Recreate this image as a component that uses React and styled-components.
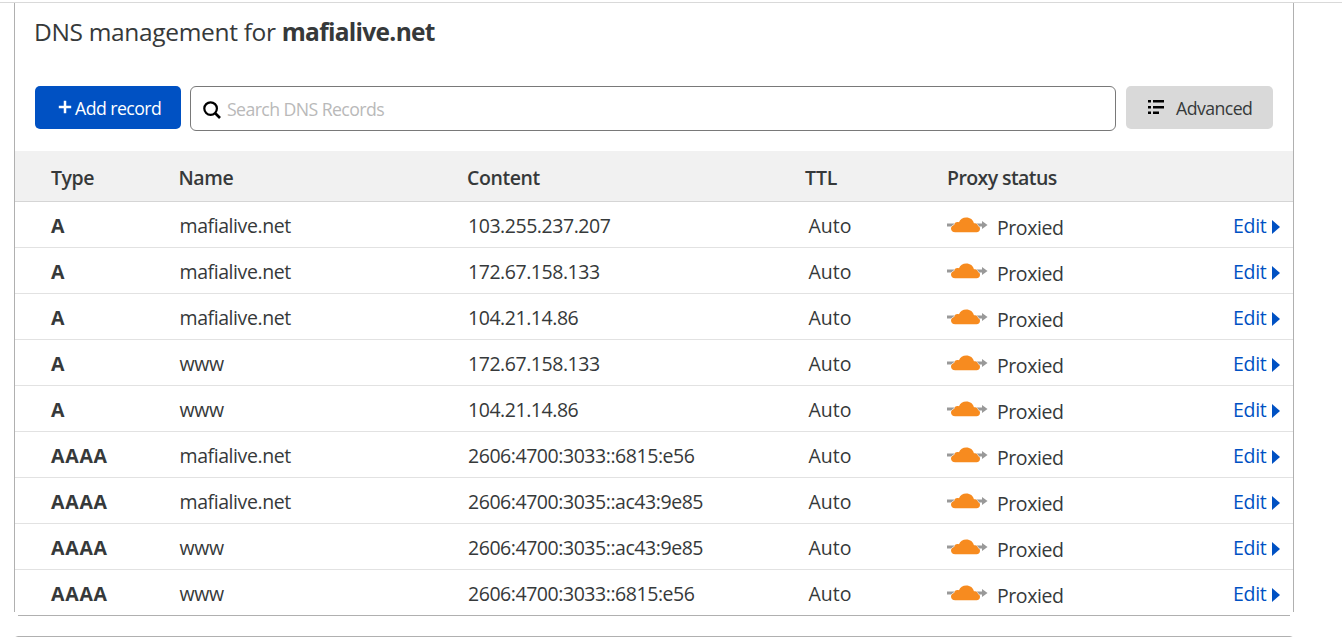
import React from 'react';
import styled, { createGlobalStyle } from 'styled-components';

const GlobalStyle = createGlobalStyle`
  * { box-sizing: border-box; }
  body {
    margin: 0;
    background: #fff;
    color: #36393a;
    font: 19.5px/26px "Open Sans", "Noto Sans", sans-serif;
    overflow: hidden;
  }
`;

const Page = styled.div`
  height: 637px;
  padding-top: 2px;
  overflow: hidden;
`;

const TopRule = styled.div`
  height: 1px;
  background: #d9d9d9;
`;

const Card = styled.section`
  position: relative;
  width: 1280px;
  height: 613px;
  margin-left: 14px;
  border: 1px solid #b0b0b0;
  border-top: 0;

  /* open corners at the bottom of the card */
  &::before,
  &::after {
    content: '';
    position: absolute;
    bottom: -1px;
    width: 4px;
    height: 4px;
    background: #fff;
  }
  &::before { left: -1px; }
  &::after { right: -1px; }
`;

const NextCard = styled.section`
  width: 1280px;
  height: 60px;
  margin: 20px 0 0 14px;
  border: 1px solid #b0b0b0;
  border-radius: 4px;
`;

const Title = styled.h2`
  margin: 0;
  padding: 12px 19px 0;
  font-size: 24.5px;
  line-height: 34px;
  font-weight: 400;
  letter-spacing: -0.33px;
  white-space: nowrap;
`;

const Domain = styled.strong`
  font-weight: 700;
  letter-spacing: -0.7px;
`;

const Toolbar = styled.div`
  display: flex;
  align-items: flex-start;
  padding: 37px 20px 0;
  height: 102px;
`;

const Button = styled.button`
  display: flex;
  align-items: center;
  flex: none;
  height: 43px;
  border: 0;
  border-radius: 5px;
  font: inherit;
  font-size: 17.7px;
  letter-spacing: -0.55px;
  white-space: nowrap;
`;

const AddButton = styled(Button)`
  width: 146px;
  padding: 0 0 0 23px;
  gap: 3px;
  background: #0051c3;
  color: #fff;
  svg { margin-top: -2px; }
`;

const AdvancedButton = styled(Button)`
  width: 147px;
  padding: 0 0 0 22px;
  gap: 12px;
  background: #d9d9d9;
  color: #36393a;
  svg { margin-top: -2px; }
`;

const SearchField = styled.div`
  display: flex;
  align-items: center;
  width: 926px;
  height: 45px;
  margin: 0 10px 0 9px;
  padding: 1px 0 0 12px;
  gap: 6px;
  border: 1px solid #797979;
  border-radius: 6px;
  color: #b9b9b9;
  font-size: 17.7px;
  letter-spacing: -0.58px;
  svg { margin-top: 2px; }
`;

const Row = styled.div`
  display: grid;
  grid-template-columns: 128.5px 288.5px 340.5px 138.5px 286px 1fr;
  height: 46px;
  padding: 11px 0 0 36px;
  border-bottom: 1px solid #e2e2e2;
  white-space: nowrap;
  &:last-child { border-bottom: 0; }
`;

const HeaderRow = styled(Row)`
  grid-template-columns: 127.5px 288.5px 338px 142px 1fr;
  height: 51px;
  padding-top: 14px;
  background: #f1f1f1;
  border-bottom-color: #d5d5d5;
  font-weight: 600;
`;

const Cell = styled.span`
  letter-spacing: ${(p) => p.$track || '-0.42px'};
`;

const TypeCell = styled(Cell)`
  font-weight: 700;
`;

const ProxyCell = styled(Cell)`
  display: flex;
  gap: 9px;
  padding-top: 2px;
  svg { flex: none; margin-top: 1px; }
`;

const EditLink = styled.a`
  display: flex;
  gap: 6px;
  color: #0051c3;
  letter-spacing: -0.3px;
  svg { margin-top: 7px; }
`;

const PlusIcon = () => (
  <svg width="14" height="14" viewBox="0 0 14 14" fill="none" stroke="currentColor" strokeWidth="2.5">
    <path d="M7 .8v12.4M.8 7h12.4" />
  </svg>
);

const SearchIcon = () => (
  <svg width="18" height="18" viewBox="0 0 18 18" fill="none" stroke="#000" strokeWidth="2.2">
    <circle cx="7.6" cy="7.6" r="6.3" />
    <path d="M12 12l5 5" strokeWidth="2.6" />
  </svg>
);

const ListIcon = () => (
  <svg width="16" height="14" viewBox="0 0 16 14" fill="#000">
    <path d="M0 0h3v2.4H0zM5 0h11v2.4H5zM0 6h3v2.4H0zM5 6h11v2.4H5zM0 11.6h3V14H0zM5 11.6h6V14H5z" />
  </svg>
);

const CloudIcon = () => (
  <svg width="41" height="18" viewBox="0 0 41 18">
    <path d="M0 7.5h35V4.9l5.5 4.1-5.5 4.1v-2.6H0z" fill="#999" />
    <path
      d="M8.2 16.2C5.7 16.2 4 14.7 4 12.5c0-2 1.3-3.3 3.3-3.6-.1-2.3 2.5-3.8 4.7-2.6C13 3.3 15.9 1.6 19.2 1.6c4 0 7.1 2.4 7.7 5.6 2.3-.4 4 1 4.1 2.8 1.2.4 2 1.4 2 2.7 0 2-1.3 3.5-3.4 3.5z"
      fill="#f78b1f"
      stroke="#fff"
      strokeWidth="1"
      paintOrder="stroke"
    />
  </svg>
);

const CaretIcon = () => (
  <svg width="8" height="14" viewBox="0 0 8 14" fill="currentColor">
    <path d="M0 0l8 7-8 7z" />
  </svg>
);

const records = [
  ['A', 'mafialive.net', '103.255.237.207'],
  ['A', 'mafialive.net', '172.67.158.133'],
  ['A', 'mafialive.net', '104.21.14.86'],
  ['A', 'www', '172.67.158.133'],
  ['A', 'www', '104.21.14.86'],
  ['AAAA', 'mafialive.net', '2606:4700:3033::6815:e56'],
  ['AAAA', 'mafialive.net', '2606:4700:3035::ac43:9e85'],
  ['AAAA', 'www', '2606:4700:3035::ac43:9e85'],
  ['AAAA', 'www', '2606:4700:3033::6815:e56'],
];

export default function App() {
  return (
    <Page>
      <GlobalStyle />
      <TopRule />
      <Card>
        <Title>
          DNS management for <Domain>mafialive.net</Domain>
        </Title>
        <Toolbar>
          <AddButton><PlusIcon />Add record</AddButton>
          <SearchField><SearchIcon />Search DNS Records</SearchField>
          <AdvancedButton><ListIcon />Advanced</AdvancedButton>
        </Toolbar>
        <HeaderRow>
          <Cell>Type</Cell>
          <Cell>Name</Cell>
          <Cell>Content</Cell>
          <Cell $track="-0.1px">TTL</Cell>
          <Cell $track="-0.58px">Proxy status</Cell>
        </HeaderRow>
        <div>
          {records.map(([type, name, content], i) => (
            <Row key={i}>
              <TypeCell $track="0.75px">{type}</TypeCell>
              <Cell>{name}</Cell>
              <Cell $track="-0.45px">{content}</Cell>
              <Cell $track="0px">Auto</Cell>
              <ProxyCell><CloudIcon />Proxied</ProxyCell>
              <EditLink>Edit<CaretIcon /></EditLink>
            </Row>
          ))}
        </div>
      </Card>
      <NextCard />
    </Page>
  );
}
